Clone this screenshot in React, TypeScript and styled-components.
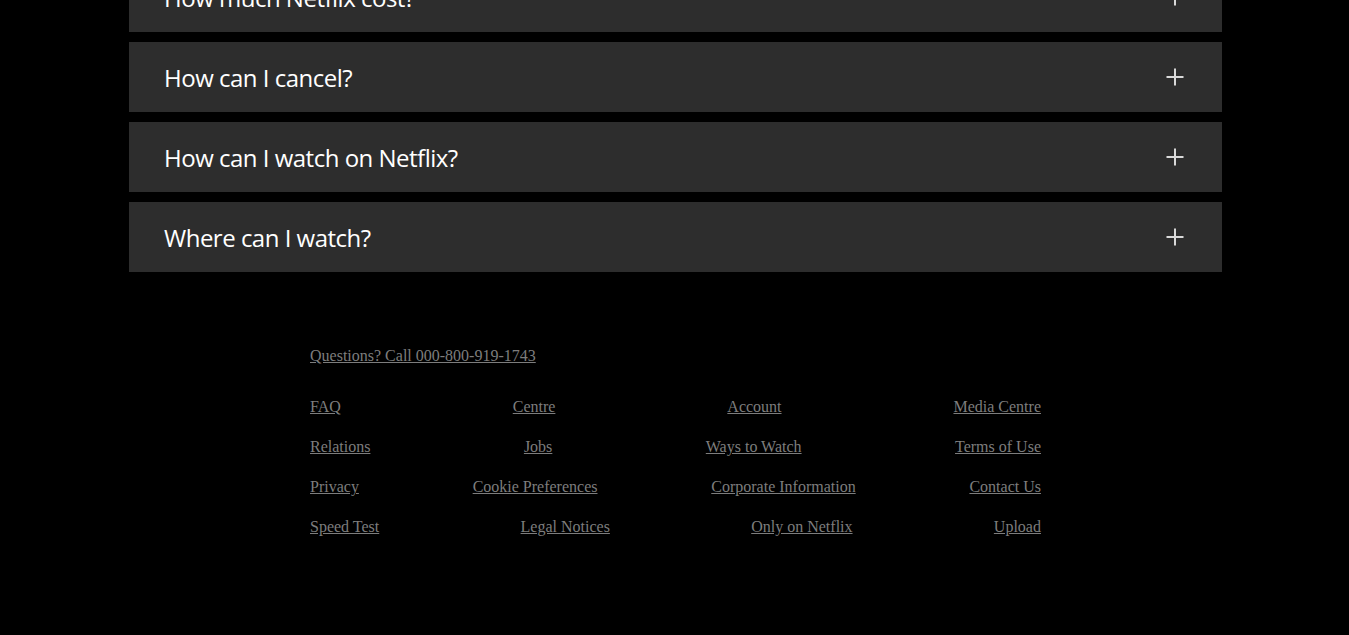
import React, { useState } from "react";
import styled, { createGlobalStyle } from "styled-components";

const Global = createGlobalStyle`
  html, body { margin: 0; padding: 0; background: #000; }
  body { font-family: "Liberation Serif", "Times New Roman", serif; overflow: hidden; }
`;

const Page = styled.div`
  background: #000;
  min-height: 635px;
  margin-top: -38px;
`;

const FaqList = styled.ul`
  list-style: none;
  margin: 0 0 0 129px;
  padding: 0;
  width: 1093px;
  display: flex;
  flex-direction: column;
  gap: 10px;
`;

const FaqItem = styled.li`
  background: #2d2d2d;
`;

const FaqButton = styled.button`
  width: 100%;
  height: 70px;
  border: 0;
  background: transparent;
  color: #fff;
  display: flex;
  align-items: center;
  justify-content: space-between;
  padding: 0 38px 0 35px;
  font-family: "Open Sans", "Noto Sans", sans-serif;
  font-size: 24px;
  letter-spacing: -0.5px;
  font-weight: 400;
  text-align: left;
  cursor: pointer;
  box-sizing: border-box;
`;

const PlusIcon = styled.svg`
  width: 18px;
  height: 18px;
  flex: none;
`;

const Footer = styled.footer`
  width: 731px;
  margin: 75px 0 0 310px;
  padding-bottom: 90px;
`;

const FooterLink = styled.a`
  color: #7d7d7d;
  font-size: 16px;
  text-decoration: underline;
`;

const Question = styled.div`
  margin-bottom: 33px;
  line-height: 18px;
`;

const LinkRow = styled.div`
  display: flex;
  justify-content: space-between;
  line-height: 18px;
  margin-bottom: 22px;
`;

const questions = [
  "How much Netflix cost?",
  "How can I cancel?",
  "How can I watch on Netflix?",
  "Where can I watch?",
];

const rows = [
  ["FAQ", "Centre", "Account", "Media Centre"],
  ["Relations", "Jobs", "Ways to Watch", "Terms of Use"],
  ["Privacy", "Cookie Preferences", "Corporate Information", "Contact Us"],
  ["Speed Test", "Legal Notices", "Only on Netflix", "Upload"],
];

export default function App() {
  const [open, setOpen] = useState<number | null>(null);
  return (
    <Page>
      <Global />
      <FaqList>
        {questions.map((q, i) => (
          <FaqItem key={q}>
            <FaqButton onClick={() => setOpen(open === i ? null : i)}>
              <span>{q}</span>
              <PlusIcon viewBox="0 0 18 18">
                <path d="M9 0.5v17M0.5 9h17" stroke="#d9d9d9" strokeWidth="2" fill="none" />
              </PlusIcon>
            </FaqButton>
          </FaqItem>
        ))}
      </FaqList>
      <Footer>
        <Question>
          <FooterLink href="#">Questions? Call 000-800-919-1743</FooterLink>
        </Question>
        {rows.map((r, i) => (
          <LinkRow key={i}>
            {r.map((l) => (
              <FooterLink key={l} href="#">
                {l}
              </FooterLink>
            ))}
          </LinkRow>
        ))}
      </Footer>
    </Page>
  );
}
